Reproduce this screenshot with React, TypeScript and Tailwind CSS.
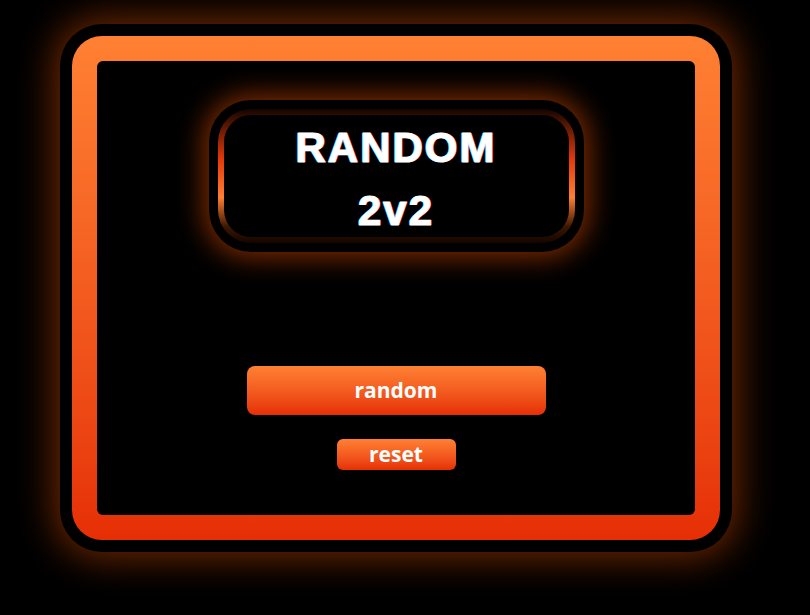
export default function App() {
  return (
    <div className="w-full h-[615px] bg-black overflow-hidden pt-[24px] pl-[60px]">
      <div className="w-[672px] h-[528px] rounded-[42px] bg-black p-[12px] shadow-[0_0_36px_6px_rgba(220,75,0,0.5)]">
        <div className="h-full rounded-[30px] bg-gradient-to-b from-[#ff8033] to-[#e62e05] p-[25px]">
          <div className="h-full rounded-[6px] bg-black flex flex-col items-center pt-[39px]">
            <div className="w-[375px] h-[152px] rounded-[42px] bg-black p-[9px] shadow-[0_0_26px_6px_rgba(220,75,0,0.55)]">
              <div className="h-full rounded-[33px] p-[6px] bg-[linear-gradient(to_bottom,#140500_0%,#e63a0a_38%,#ff7f32_66%,#3a1600_88%,#140500_100%)]">
                <div className="h-full rounded-[27px] bg-black flex flex-col items-center justify-center pt-[5px] font-['Liberation_Sans',Arial,sans-serif] font-bold text-white text-[42px] leading-[63px] tracking-[2px] [-webkit-text-stroke:1px_#fff] [text-shadow:-1px_0_#00d8ff,1px_0_#ff2f6a]">
                  <div>RANDOM</div>
                  <div>2v2</div>
                </div>
              </div>
            </div>
            <button className="mt-[114px] w-[299px] h-[49px] rounded-[8px] bg-gradient-to-b from-[#ff8033] to-[#e62e05] text-white font-bold text-[21px] font-['Open_Sans',sans-serif]">
              random
            </button>
            <button className="mt-[24px] w-[119px] h-[31px] rounded-[6px] bg-gradient-to-b from-[#ff8033] to-[#e62e05] text-white font-bold text-[21px] leading-[31px] font-['Open_Sans',sans-serif]">
              reset
            </button>
          </div>
        </div>
      </div>
    </div>
  );
}
